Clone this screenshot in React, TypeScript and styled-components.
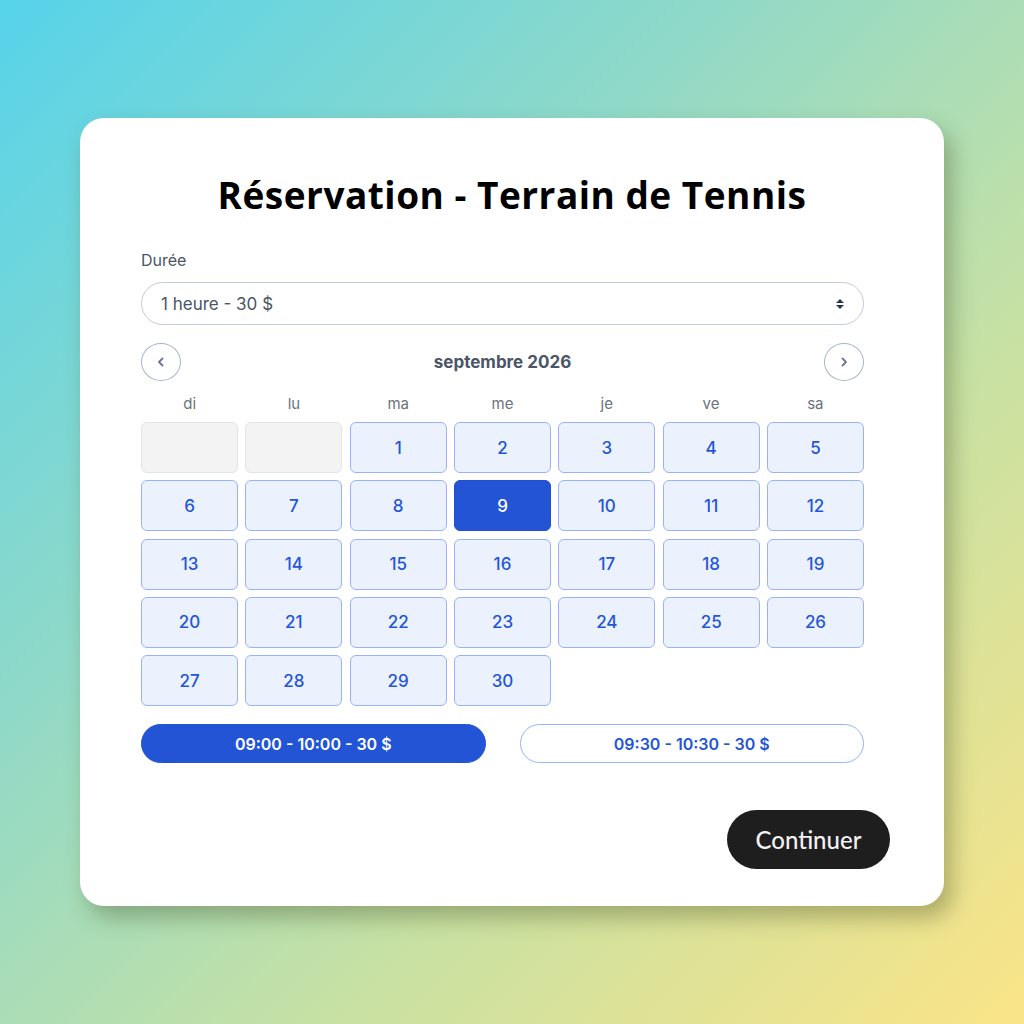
import styled, { createGlobalStyle } from 'styled-components';

const GlobalStyle = createGlobalStyle`
	html, body {
		margin: 0;
		padding: 0;
	}
	body {
		font-family: Inter, "Liberation Sans", sans-serif;
	}
`;

const Page = styled.div`
	width: 1024px;
	height: 1024px;
	background: linear-gradient(135deg, #56d3ea 0%, #8fd9c8 35%, #c6e1a4 65%, #fbe487 100%);
	display: flex;
	align-items: flex-start;
	justify-content: flex-start;
	padding: 118px 0 0 80px;
	box-sizing: border-box;
`;

const Card = styled.div`
	width: 864px;
	height: 788px;
	box-sizing: border-box;
	background: #fff;
	border-radius: 24px;
	box-shadow: 8px 12px 22px rgba(60, 70, 30, 0.35);
	padding: 52px 80px 0 61px;
	display: flex;
	flex-direction: column;
`;

// centred on the whole card, not on the form column
const Title = styled.h1`
	margin: 0 -80px 30px -61px;
	text-align: center;
	font-family: "Open Sans", Lato, sans-serif;
	font-weight: 700;
	font-size: 37px;
	line-height: 50px;
	color: #000;
	letter-spacing: 0.5px;
`;

const Label = styled.div`
	font-size: 16px;
	color: #4a5568;
	line-height: 20px;
	margin-bottom: 12px;
`;

const Select = styled.div`
	height: 43px;
	box-sizing: border-box;
	border: 1.5px solid #c3c9df;
	border-radius: 22px;
	display: flex;
	align-items: center;
	justify-content: space-between;
	padding: 0 18px 0 19px;
	font-size: 17px;
	color: #4a5568;
`;

const MonthNav = styled.div`
	display: flex;
	align-items: center;
	justify-content: space-between;
	margin-top: 18px;
	height: 38px;
`;

const NavButton = styled.div`
	width: 40px;
	height: 38px;
	box-sizing: border-box;
	border: 1.5px solid #a9b2cc;
	border-radius: 50%;
	display: flex;
	align-items: center;
	justify-content: center;
`;

const MonthLabel = styled.div`
	font-size: 17px;
	font-weight: 700;
	color: #4a5568;
`;

const Weekdays = styled.div`
	display: grid;
	grid-template-columns: repeat(7, 1fr);
	column-gap: 7px;
	margin-top: 12px;
	height: 20px;
	align-items: center;
`;

const Weekday = styled.div`
	text-align: center;
	font-size: 15px;
	color: #6b7280;
`;

const Grid = styled.div`
	display: grid;
	grid-template-columns: repeat(7, 1fr);
	grid-auto-rows: 51px;
	column-gap: 7.3px;
	row-gap: 7.25px;
	margin-top: 9px;
`;

type DayProps = {
	$variant: 'empty' | 'normal' | 'selected';
};

const Day = styled.div<DayProps>`
	box-sizing: border-box;
	border-radius: 6px;
	display: flex;
	align-items: center;
	justify-content: center;
	font-size: 17px;
	font-weight: 500;
	border: 1.5px solid
		${props => props.$variant === 'empty' ? '#e4e4e4' : props.$variant === 'selected' ? '#1f4fcf' : '#98b3fa'};
	background: ${props => props.$variant === 'empty' ? '#f3f3f3' : props.$variant === 'selected' ? '#2354d6' : '#ecf1fe'};
	color: ${props => props.$variant === 'selected' ? '#fff' : '#2456d6'};
`;

const Slots = styled.div`
	display: grid;
	grid-template-columns: 1fr 1fr;
	column-gap: 34px;
	margin-top: 18px;
`;

type SlotProps = {
	$active: boolean;
};

const Slot = styled.div<SlotProps>`
	height: 39px;
	box-sizing: border-box;
	border-radius: 20px;
	border: 1.5px solid ${props => props.$active ? '#2354d6' : '#98b3fa'};
	background: ${props => props.$active ? '#2354d6' : '#fff'};
	color: ${props => props.$active ? '#fff' : '#2456d6'};
	display: flex;
	align-items: center;
	justify-content: center;
	font-size: 16px;
	font-weight: 600;
`;

const Footer = styled.div`
	display: flex;
	justify-content: flex-end;
	margin-top: 47px;
	margin-right: -26px;
`;

const ContinueButton = styled.div`
	width: 163px;
	height: 59px;
	border-radius: 30px;
	background: #1e1e1e;
	color: #f2f2f2;
	font-family: Lato, "Open Sans", sans-serif;
	font-size: 24px;
	font-weight: 500;
	display: flex;
	align-items: center;
	justify-content: center;
`;

const weekdays = ['di', 'lu', 'ma', 'me', 'je', 've', 'sa'];

const Chevron = ({ dir }: { dir: 'left' | 'right' }) => (
	<svg width="12" height="12" viewBox="0 0 12 12" fill="none">
		<path
			d={dir === 'left' ? 'M7.5 2.5 L4 6 L7.5 9.5' : 'M4.5 2.5 L8 6 L4.5 9.5'}
			stroke="#6b7694"
			strokeWidth="1.8"
			strokeLinecap="round"
			strokeLinejoin="round"
		/>
	</svg>
);

const SortIcon = () => (
	<svg width="10" height="12" viewBox="0 0 10 12">
		<path d="M5 1 L9 5 H1 Z" fill="#2d3748" />
		<path d="M5 11 L9 7 H1 Z" fill="#2d3748" />
	</svg>
);

const App = () => {
	const days: (number | null)[] = [null, null];
	for (let i = 1; i <= 30; i++) days.push(i);
	return (
		<>
			<GlobalStyle />
			<Page>
				<Card>
					<Title>Réservation - Terrain de Tennis</Title>
					<Label>Durée</Label>
					<Select>
						<span>1 heure - 30 $</span>
						<SortIcon />
					</Select>
					<MonthNav>
						<NavButton><Chevron dir="left" /></NavButton>
						<MonthLabel>septembre 2026</MonthLabel>
						<NavButton><Chevron dir="right" /></NavButton>
					</MonthNav>
					<Weekdays>
						{weekdays.map(w => <Weekday key={w}>{w}</Weekday>)}
					</Weekdays>
					<Grid>
						{days.map((d, i) => (
							<Day key={i} $variant={d === null ? 'empty' : d === 9 ? 'selected' : 'normal'}>
								{d}
							</Day>
						))}
					</Grid>
					<Slots>
						<Slot $active>09:00 - 10:00 - 30 $</Slot>
						<Slot $active={false}>09:30 - 10:30 - 30 $</Slot>
					</Slots>
					<Footer>
						<ContinueButton>Continuer</ContinueButton>
					</Footer>
				</Card>
			</Page>
		</>
	);
};

export default App;
